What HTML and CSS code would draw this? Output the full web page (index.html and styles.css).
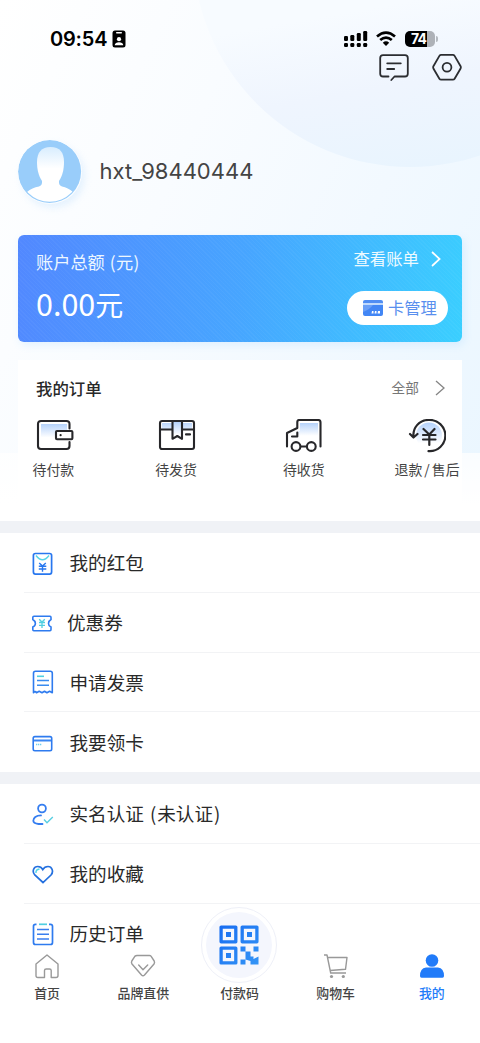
FILE: index.html
```html
<!DOCTYPE html>
<html lang="zh-CN">
<head>
<meta charset="utf-8">
<meta name="viewport" content="width=device-width">
<title>我的</title>
<link rel="stylesheet" href="styles.css">
</head>
<body>
<div class="screen">
  <section class="hero">
    <div class="orb"></div>
    <header class="status">
      <span class="clock">09:54</span>
      <svg class="badge" viewBox="0 0 14 18"><rect x=".5" y=".5" width="13" height="17" rx="2.5" fill="#000"/><rect x="4" y="2" width="6" height="1.4" rx=".7" fill="#fff"/><circle cx="7" cy="9.2" r="2.1" fill="#fff"/><path d="M2.7 15.3c0-4 8.6-4 8.6 0z" fill="#fff"/></svg>
      <svg class="signal" viewBox="0 0 24 16"><g fill="#000"><rect x="0" y="5" width="4" height="5" rx="1.2"/><rect x="6.3" y="4" width="4" height="6" rx="1.2"/><rect x="12.8" y="2" width="4" height="8" rx="1.2"/><rect x="19.2" y="0" width="4" height="10" rx="1.2"/><rect x="0" y="12" width="4" height="4" rx="1.2"/><rect x="6.3" y="12" width="4" height="4" rx="1.2"/><rect x="12.8" y="12" width="4" height="4" rx="1.2"/><rect x="19.2" y="12" width="4" height="4" rx="1.2"/></g></svg>
      <svg class="wifi" viewBox="0 0 20 15"><g fill="none" stroke="#000" stroke-width="2.7"><path d="M1 5.5Q10-2.2 19 5.5"/><path d="M4.2 9.1Q10 4.1 15.8 9.1"/></g><path d="M6.8 11.7Q10 9 13.2 11.7L10 15z" fill="#000"/></svg>
      <div class="battery"><span>74</span></div>
    </header>
    <div class="tools">
      <svg width="30" height="28" viewBox="0 0 30 28"><g fill="none" stroke="#2b2d31" stroke-width="1.8" stroke-linecap="round" stroke-linejoin="round"><path d="M9.500 22.500H4Q1.200 22.500 1.200 19.700V4Q1.200 1.200 4 1.200H26Q28.800 1.200 28.800 4V19.700Q28.800 22.500 26 22.500H15.500L12.300 26"/><path d="M8.200 9.300H21.800M8.200 15H15.200"/></g></svg>
      <svg width="30" height="28" viewBox="0 0 30 28"><g fill="none" stroke="#2b2d31" stroke-width="1.800" stroke-linejoin="round"><path d="M9.200.9H20.800Q22 .9 22.600 1.900L28.600 12.200Q29.100 13.300 28.600 14.500L22.600 24.700Q22 25.700 20.800 25.700H9.200Q8 25.700 7.400 24.700L1.400 14.500Q.9 13.300 1.400 12.200L7.400 1.900Q8 .9 9.200 .9Z"/><circle cx="15" cy="13.300" r="4.400"/></g></svg>
    </div>
    <div class="profile">
      <svg class="avatar" viewBox="0 0 64 64"><defs><linearGradient id="head" x2="0" y2="1"><stop stop-color="#d8edfe"/><stop offset=".55" stop-color="#fff"/></linearGradient><clipPath id="disc"><circle cx="31.700" cy="31.200" r="30.600"/></clipPath></defs><circle cx="31.600" cy="31.500" r="31.500" fill="#99cdfa"/><g clip-path="url(#disc)"><path d="M9 52Q14 47.500 21 46.500Q24.500 45.500 24 41H41Q40.500 45.500 44 46.500Q50 47.500 55 52V64H9Z" fill="#fff"/></g><path d="M32.500 7C42 7 46 12.500 46 22C46 36 40 46 32.500 46S19 36 19 22C19 12.500 23.500 7 32.500 7Z" fill="url(#head)"/></svg>
      <span class="username">hxt_98440444</span>
    </div>
    <div class="account">
      <div class="balance"><div class="caption">账户总额<span class="unit">(元)</span></div><div class="amount">0.00<span class="yuan">元</span></div></div>
      <div class="actions">
        <div class="bill">查看账单<svg width="10" height="16" viewBox="0 0 10 16"><path d="M1 1L8.600 8L1 15" fill="none" stroke="#fff" stroke-width="1.700"/></svg></div>
        <div class="cards"><svg width="20" height="16" viewBox="0 0 20 16"><path d="M2 0H18Q20 0 20 2V3H0V2Q0 0 2 0Z" fill="#508df3"/><path d="M0 5H20V14Q20 16 18 16H2Q0 16 0 14Z" fill="#4286f5"/><path d="M0 5H10Q6 10 0 12Z" fill="#6a9ff7"/><path d="M0 3H20V5H0Z" fill="#c0d9fc"/><path d="M9 11h1.500v2.500H8.500zM12 11h1.500v2.500h-2zM15 11h2v2.500h-2.500z" fill="#fff"/></svg><span>卡管理</span></div>
      </div>
    </div>
    <div class="orders">
      <div class="orders-head"><h2>我的订单</h2><span class="all">全部</span><svg width="10" height="16" viewBox="0 0 10 16"><path d="M1 1L9 8L1 15" fill="none" stroke="#858585" stroke-width="1.300"/></svg></div>
      <div class="order-list">
        <div class="order pay"><svg width="38" height="34" viewBox="0 0 38 34"><defs><linearGradient id="tint" x2="0" y2="1"><stop stop-color="#b5d2fb"/><stop offset=".8" stop-color="#fff"/></linearGradient></defs><path d="M5 5H31V22H5Z" fill="url(#tint)"/><g fill="none" stroke="#27272a" stroke-width="2.100"><path d="M33.500 9.500V5Q33.500 2 30.500 2H5Q2 2 2 5V27Q2 30 5 30H30.500Q33.500 30 33.500 27V23" stroke-linecap="round"/><rect x="20" y="12" width="16.400" height="8.200" rx="1" fill="#fff"/></g><circle cx="24.600" cy="16.200" r="1.100" fill="#222"/></svg><span>待付款</span></div>
        <div class="order send"><svg width="38" height="34" viewBox="0 0 38 34"><path d="M4 4H34V11H4ZM15 3H24V19L19.500 16L15 19Z" fill="url(#tint)"/><g fill="none" stroke="#27272a" stroke-width="2.100" stroke-linejoin="round"><rect x="2" y="2" width="34" height="28" rx="2"/><path d="M2 10.500H14.500M24 10.500H36M14.500 2V19.800L19.300 17L24 19.800V2"/><path d="M28 15.400H32" stroke-linecap="round"/></g></svg><span>待发货</span></div>
        <div class="order receive"><svg width="38" height="34" viewBox="0 0 38 34"><path d="M15 4H33V20H13V12H15Z" fill="url(#tint)"/><g fill="none" stroke="#27272a" stroke-width="2.100" stroke-linejoin="round" stroke-linecap="round"><path d="M2 27.500V14L12.300 9V3Q12.300 1 14.300 1H33Q35.500 1 35.500 3.500V27.500M7 17.500H12.300V13.500M16 27.500H21"/><circle cx="11" cy="27.500" r="4.400" fill="#fff"/><circle cx="26.300" cy="27.500" r="4.400" fill="#fff"/></g></svg><span>待收货</span></div>
        <div class="order refund"><svg width="38" height="34" viewBox="0 0 38 34"><circle cx="21" cy="16.500" r="13" fill="url(#tint)"/><g fill="none" stroke="#27272a" stroke-width="2.200" stroke-linecap="round" stroke-linejoin="round"><path d="M5.500 18C4.500 9 11 1 20.500 1A15.600 15.600 0 1 1 20.500 32.100M2 15L5.500 18.500L9.500 15M15.500 10L21.300 15.500L26.500 10M15 16H27.500M15 20.500H27.500M21.300 16V26"/></g></svg><span>退款<i>/</i>售后</span></div>
      </div>
    </div>
  </section>
  <main class="menu">
    <section class="group">
      <div class="item"><svg viewBox="0 0 22 26"><rect x="1.400" y="2.500" width="18.200" height="20.600" rx="2" fill="none" stroke="#2877ef" stroke-width="1.700"/><path d="M4 4.500Q10.500 13 17 4.500" fill="none" stroke="#57d5e7" stroke-width="1.400"/><path d="M7.200 12L10.500 15L13.800 12M10.500 15V20.700M6.800 15.300H14.300M6.800 18H14.300" fill="none" stroke="#2878ef" stroke-width="1.400"/></svg><span>我的红包</span></div>
      <div class="item coupon"><svg viewBox="0 0 22 26"><path d="M2 5.200H18Q19 5.200 19 6.500V8.500Q16.500 10 16.500 12.400T19 16V18.500Q19 19.700 18 19.700H1.800Q.8 19.700.8 18.500V16Q3.400 14.800 3.400 12.400T.8 8.500V6.500Q.8 5.200 2 5.200Z" fill="none" stroke="#2e7bef" stroke-width="1.600"/><path d="M7.200 8.300L10 11L12.800 8.300M10 11V17M7 11.500H13M7 14.300H13" fill="none" stroke="#50cfe1" stroke-width="1.300"/></svg><span>优惠券</span></div>
      <div class="item"><svg viewBox="0 0 22 26"><path d="M1.500 22.700V3.200Q1.500 1.200 3.500 1.200H18.300Q20.300 1.200 20.300 3.200V22.700L17.600 21.200L14.900 22.700L12.500 21.200L10 22.700L7.200 21.200L4.500 22.700Q3 20.500 1.500 22.700Z" fill="none" stroke="#2e7bef" stroke-width="1.600" stroke-linejoin="round"/><path d="M5 6.300H12" stroke="#50cfe1" stroke-width="1.600"/><path d="M5 10.500H17M5 15.200H17" stroke="#398bef" stroke-width="1.600"/></svg><span>申请发票</span></div>
      <div class="item"><svg viewBox="0 0 22 26"><path d="M1 9.500H20" stroke="#3b86f2" stroke-width="2"/><rect x="1.200" y="5.600" width="18.500" height="14.200" rx="1.700" fill="none" stroke="#2e7bef" stroke-width="1.600"/><path d="M4 13.500H10" stroke="#70cfee" stroke-width="1.300" stroke-dasharray="1.300 .7"/></svg><span>我要领卡</span></div>
    </section>
    <section class="group">
      <div class="item"><svg viewBox="0 0 22 26"><g fill="none" stroke="#347df0" stroke-width="1.800" stroke-linecap="round"><circle cx="10" cy="6.500" r="3.900"/><path d="M9 13.400C4 13.400 1.300 16 1.300 18.800C1.300 21 3.500 21.700 6.500 22H10.500"/></g><path d="M12 17.500L15 20.800L20.800 15" fill="none" stroke="#58cfe2" stroke-width="1.400"/></svg><span>实名认证<b>(</b>未认证<b>)</b></span></div>
      <div class="item"><svg viewBox="0 0 22 26"><path d="M11 20.500L2.800 13C-.5 9 2 4.500 5.700 4.500C8 4.500 9.700 5.500 10.800 7.500C12 5.500 13.800 4.500 16 4.500C20 4.500 22 9.500 19 13Z" fill="none" stroke="#2470df" stroke-width="1.700"/><path d="M4 11Q3.500 7.700 7.500 7" fill="none" stroke="#50d5e7" stroke-width="1.400"/></svg><span>我的收藏</span></div>
      <div class="item"><svg viewBox="0 0 22 26"><path d="M4.500 2.300H3.500Q1.500 2.300 1.500 4.300V20.500Q1.500 22.500 3.500 22.500H18.500Q20.500 22.500 20.500 20.500V4.300Q20.500 2.300 18.500 2.300H17" fill="none" stroke="#2e7bef" stroke-width="1.700"/><path d="M7 2.300H15" stroke="#50cfe1" stroke-width="1.700"/><path d="M5 7.500H17M5 12.200H17M5 17H17" stroke="#397eef" stroke-width="1.600"/></svg><span>历史订单</span></div>
    </section>
  </main>
  <nav class="tabs">
    <div class="tab"><svg width="26" height="26" viewBox="0 0 26 26"><path d="M2 11L13 2L24 11V22.500Q24 24.500 22 24.500H17.200V17.500Q17.200 16 15.500 16H12.200Q10.500 16 10.500 17.500V24.500H4Q2 24.500 2 22.500Z" fill="none" stroke="#999" stroke-width="1.400" stroke-linejoin="round"/></svg><span>首页</span></div>
    <div class="tab"><svg width="26" height="26" viewBox="0 0 26 26"><g fill="none" stroke="#999" stroke-width="1.400" stroke-linejoin="round" stroke-linecap="round"><path d="M7 2.500H19.500Q20.500 2.500 21 3.100L24.200 8Q25 9.500 24 11L14.500 22Q13 23.500 11.500 22L2 11Q1 9.500 1.800 8L5 3.100Q5.700 2.500 7 2.500Z"/><path d="M8.700 12L13 16.700L17.700 12"/></g></svg><span>品牌直供</span></div>
    <div class="tab paycode"><div class="ring"><div class="disc"><svg width="40" height="40" viewBox="0 0 40 40"><defs><linearGradient id="qr" x1="0" y1="0" x2="40" y2="40" gradientUnits="userSpaceOnUse"><stop stop-color="#176cf1"/><stop offset="1" stop-color="#3495f6"/></linearGradient></defs><g fill="none" stroke="url(#qr)" stroke-width="3.300" stroke-linejoin="round"><rect x="2.100" y="2.100" width="14.700" height="14.700"/><rect x="23.200" y="2.100" width="14.700" height="14.700"/><rect x="2.100" y="23.200" width="14.700" height="14.700"/></g><path d="M7 7h5v5H7zM28 7h5v5h-5zM7 28h5v5H7zM21.500 21.500h5v5h-5zM34.500 21.500h5v5h-5zM26.500 26.500h5v5h3V34l5-2.500v8h-8V36l-5-1.500zM21.500 34.500h5v5h-5z" fill="url(#qr)"/></svg></div></div><span>付款码</span></div>
    <div class="tab"><svg width="26" height="26" viewBox="0 0 26 26"><g fill="none" stroke="#999" stroke-width="1.400" stroke-linejoin="round"><path d="M1 2H4L7.700 20H23M4.700 4.500H24L22.500 16.300L7 17.500"/></g><circle cx="8.500" cy="23.500" r="1.600" fill="#999"/><circle cx="20.300" cy="23.500" r="1.600" fill="#999"/></svg><span>购物车</span></div>
    <div class="tab active"><svg width="26" height="26" viewBox="0 0 26 26"><circle cx="13" cy="7.500" r="6.300" fill="#217bf9"/><path d="M7 14.600H19Q25 15.500 25 23Q25 24.700 23.500 24.700H2.500Q1 24.700 1 23Q1 15.500 7 14.600Z" fill="#217bf9"/></svg><span>我的</span></div>
  </nav>
</div>
</body>
</html>
```

FILE: styles.css
```css
* { box-sizing: border-box; }
body { margin: 0; font-family: "Noto Sans CJK SC", sans-serif; color: #292929; background: #fff; }
svg { display: block; flex: none; }
.screen { position: relative; width: 480px; height: 1043px; overflow: hidden; background: #fff; }

.hero {
  position: relative; height: 521px; overflow: hidden;
  background:
    linear-gradient(180deg, transparent 452.500px, rgba(255,255,255,.75) 453.500px, #fff 505px),
    linear-gradient(115deg, #fff 0%, #f9fcff 35%, #f2f9ff 65%, #eaf6ff 100%);
}
.hero > :not(.orb) { position: relative; }
.orb { position: absolute; left: 193px; top: -267px; width: 434px; height: 434px; border-radius: 50%; background: linear-gradient(170deg, #f7fbff 60%, #eff5fe 76%, #e6f4fe 100%); }
.status { display: flex; height: 53px; padding: 30px 43px 0 50px; }
.clock { width: 61.500px; font: 600 20px/18px Inter, sans-serif; letter-spacing: -.2px; color: #000; }
.badge { width: 14px; height: 18px; }
.signal { width: 24px; height: 16px; margin: 1px 8px 0 auto; }
.wifi { width: 20px; height: 15px; margin: 1px 9px 0 0; }
.battery { position: relative; width: 30px; height: 16px; margin: 1px 2px 0 0; border-radius: 5px; background: linear-gradient(90deg, #000 22px, #aeb2b8 22px); }
.battery::after { content: ""; position: absolute; left: 31px; top: 5px; width: 2px; height: 6px; border-radius: 0 2px 2px 0; background: #b5bac0; }
.battery span { display: block; padding-left: 6px; font: 700 14px/16px Inter, sans-serif; letter-spacing: -.8px; color: #fff; }
.tools { display: flex; justify-content: flex-end; gap: 23px; padding: 1px 18px 0 0; height: 87px; }
.profile { display: flex; align-items: center; height: 63px; margin-left: 18px; gap: 17.500px; }
.avatar { width: 64px; height: 64px; border-radius: 50%; box-shadow: 3px 4px 7px rgba(153,205,250,.22); }
.username { margin-top: -1px; font: 400 22px/28px Inter, sans-serif; color: #444; }

.account {
  display: flex; justify-content: space-between; height: 107px; margin: 32px 18px 0; border-radius: 6px; color: #fff;
  background:
    repeating-linear-gradient(45deg, rgba(255,255,255,.03) 0 1px, transparent 1px 3px),
    linear-gradient(100deg, #5288ff 0%, #47a5ff 50%, #3acfff 100%);
  box-shadow: 2px 3px 8px rgba(90,180,255,.15);
}
.balance { padding: 15px 0 0 18px; }
.caption { font-size: 17.200px; line-height: 24px; color: #edf7ff; }
.unit { margin-left: 5px; letter-spacing: .4px; }
.amount { margin-top: 10px; font-size: 30.500px; line-height: 38px; }
.yuan { font-size: 28px; }
.actions { display: flex; flex-direction: column; align-items: flex-end; padding: 12px 14px 0 0; }
.bill { display: flex; align-items: center; gap: 12px; padding-right: 7px; height: 22px; font-size: 16.400px; color: #edfaff; }
.bill svg { margin-top: 1px; }
.cards { display: flex; align-items: center; gap: 5px; width: 101px; height: 34px; margin-top: 22px; padding-left: 16px; border-radius: 17px; background: #fff; font-size: 16.300px; color: #598fee; }
.cards span { margin-top: -2px; }

.orders { height: 160px; margin: 18px 18px 0; background: #fff; }
.orders-head { display: flex; align-items: center; height: 55px; padding: 0 17px 0 18px; }
.orders-head h2 { flex: 1; margin: 1px 0 0; font-size: 16.400px; font-weight: 500; line-height: 24px; }
.all { margin: -2px 16px 0 0; font-size: 13.700px; color: #777; }
.order-list { display: flex; padding-top: 4px; }
.order { display: flex; flex-direction: column; align-items: center; }
.order span { margin-top: 5px; font-size: 13.900px; line-height: 22px; white-space: nowrap; color: #444; }
.order i { margin: 0 2px; font-style: normal; }
.pay { margin-left: 14.500px; }
.send { margin-left: 81px; }
.receive { margin-left: 86px; }
.refund { margin-left: 70px; }
.pay svg { margin-left: 3px; }
.send svg, .receive svg { margin-left: 1px; }

.group { border-top: 12px solid #f0f2f6; height: 251px; background: #fff; }
.item { display: flex; align-items: center; height: 59.800px; margin-left: 24px; padding-left: 8px; border-bottom: 1.500px solid #f2f3f5; font-size: 18.600px; }
.item:last-child { border-bottom: 0; }
.item svg { width: 22px; height: 26px; margin: 3px 15.500px 0 0; }
.item span { margin-top: -1px; }
.item.coupon svg { margin-right: 13px; }
.item b { font-weight: 400; margin: 0 1px 0 6px; }
.item b:last-child { margin: 0 0 0 1px; }

.tabs { position: absolute; left: -1px; bottom: 0; display: flex; width: 481px; height: 91px; background: #fff; }
.tab { display: flex; flex-direction: column; align-items: center; width: 96.200px; }
.tab span { margin-top: 4px; font-size: 12.900px; font-weight: 500; line-height: 20px; color: #444; white-space: nowrap; }
.tab svg { margin-top: 1px; }
.tab.active span { color: #217bf9; }
.ring { display: flex; align-items: center; justify-content: center; flex: none; width: 76px; height: 76px; margin-top: -45px; border: 1px solid #eef0f8; border-radius: 50%; background: #fff; }
.disc { display: flex; align-items: center; justify-content: center; width: 66px; height: 66px; border-radius: 50%; background: #f4f6fd; }
.disc svg { margin-top: 0; }
.paycode span { margin-top: 0; }
```
